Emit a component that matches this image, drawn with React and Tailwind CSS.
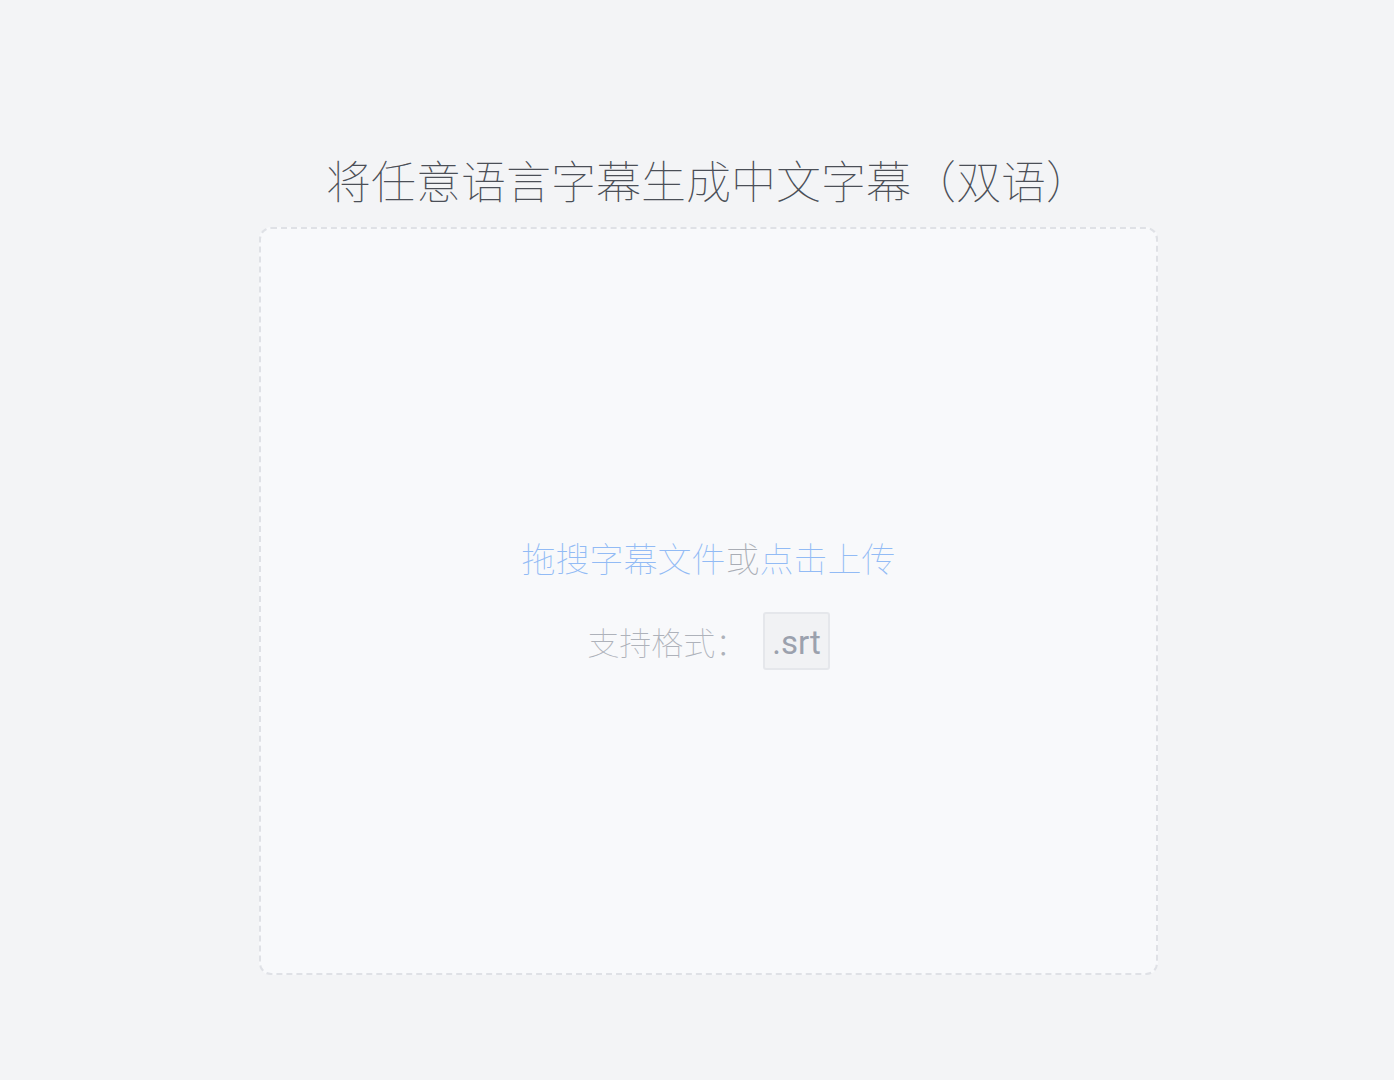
const cjk = { fontFamily: '"Noto Sans CJK SC", "Noto Sans", sans-serif' };

export default function App() {
  return (
    <div className="min-h-screen bg-[#f3f4f6] flex flex-col items-center pl-[23px] pt-[146px]" style={cjk}>
      {/* Title */}
      <h1 className="text-[45px] leading-[67px] font-thin text-[#4b4f57] mb-[14px]">
        将任意语言字幕生成中文字幕（双语）
      </h1>

      {/* Drop zone */}
      <div className="w-[899px] h-[748px] pt-[4px] border-2 border-dashed border-[#dfe1e6] rounded-xl bg-[#f8f9fb] flex flex-col items-center justify-center cursor-pointer">
        <p className="text-[34px] leading-[44px] font-thin">
          <span className="text-[#92bbf5]">拖搜字幕文件</span>
          <span className="text-[#a9adb5]">或</span>
          <span className="text-[#92bbf5]">点击上传</span>
        </p>
        <div className="mt-[32px] flex items-center">
          <span className="text-[32px] font-thin text-[#aeb2ba]">支持格式：</span>
          <span
            className="ml-[16px] h-[58px] pt-[3px] px-[7px] flex items-center bg-[#f1f2f4] border-2 border-[#e5e7eb] rounded-[3px] text-[33px] text-[#9ba1ad]"
            style={{ fontFamily: 'Roboto, "Liberation Sans", sans-serif' }}
          >
            .srt
          </span>
        </div>
      </div>
    </div>
  );
}
